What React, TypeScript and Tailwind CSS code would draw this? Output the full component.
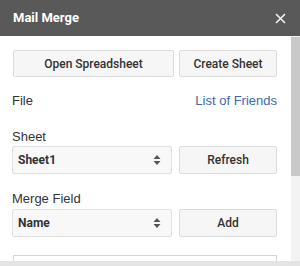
import * as React from "react";

const arial = { fontFamily: "'Liberation Sans', Arial, sans-serif" };

function Stepper() {
  return (
    <svg width="8" height="12" viewBox="0 0 8 12" className="text-[#555]">
      <path d="M4 1 L7.5 5 H0.5 Z" fill="currentColor" />
      <path d="M4 11 L7.5 7 H0.5 Z" fill="currentColor" />
    </svg>
  );
}

function GrayButton({ label, className }: { label: string; className?: string }) {
  return (
    <button
      className={`h-full rounded-[2px] border border-[#dcdcdc] bg-[#f6f6f6] text-[12px] font-medium text-[#333] ${className ?? ""}`}
    >
      {label}
    </button>
  );
}

function SelectBox({ value }: { value: string }) {
  return (
    <div className="flex h-full w-[160px] items-center justify-between rounded-[2px] border border-[#e0e0e0] bg-[#f8f8f8] pl-[5px] pr-[10px]">
      <span className="text-[12px] font-bold text-[#333]">{value}</span>
      <Stepper />
    </div>
  );
}

export default function App() {
  return (
    <div
      className="flex h-[266px] w-[300px] flex-col overflow-hidden bg-white"
      style={{ fontFamily: "Roboto, 'Liberation Sans', Arial, sans-serif" }}
    >
      <div className="flex h-[36px] shrink-0 items-center justify-between bg-[#595959] pl-[13px] pr-[14px]">
        <span className="text-[13px] font-bold text-white">Mail Merge</span>
        <svg width="11" height="11" viewBox="0 0 11 11">
          <path d="M1 1 L10 10 M10 1 L1 10" stroke="#f2f2f2" strokeWidth="1.6" />
        </svg>
      </div>

      <div className="flex min-h-0 flex-1 overflow-hidden">
        <div className="flex w-[291px] flex-col pl-[12px] pr-[14px] pt-[14px]">
          <div className="flex h-[27px] shrink-0 gap-[5px]">
            <GrayButton label="Open Spreadsheet" className="ml-[1px] w-[161px]" />
            <GrayButton label="Create Sheet" className="w-[98px]" />
          </div>

          <div className="mt-[16px] flex h-[16px] shrink-0 items-center justify-between" style={arial}>
            <span className="text-[13px] text-[#333]">File</span>
            <span className="text-[13px] text-[#3c67b4]">List of Friends</span>
          </div>

          <div className="mt-[20px] h-[16px] shrink-0 text-[13px] leading-[16px] text-[#333]" style={arial}>
            Sheet
          </div>
          <div className="mt-[1px] flex h-[28px] shrink-0 gap-[7px]">
            <SelectBox value="Sheet1" />
            <GrayButton label="Refresh" className="w-[98px]" />
          </div>

          <div className="mt-[17px] h-[16px] shrink-0 text-[13px] leading-[16px] text-[#333]" style={arial}>
            Merge Field
          </div>
          <div className="mt-[2px] flex h-[28px] shrink-0 gap-[7px]">
            <SelectBox value="Name" />
            <GrayButton label="Add" className="w-[98px]" />
          </div>

          <div className="ml-[1px] mt-[18px] h-[20px] w-[264px] shrink-0 border-x border-t border-[#d6d6d6]" />
        </div>

        <div className="flex w-[9px] flex-col bg-[#f3f3f3]">
          <div className="mt-[1px] h-[139px] w-full bg-[#c9c9c9]" />
        </div>
      </div>

      <div className="h-[5px] shrink-0 bg-[#e4e4e4]" />
    </div>
  );
}
